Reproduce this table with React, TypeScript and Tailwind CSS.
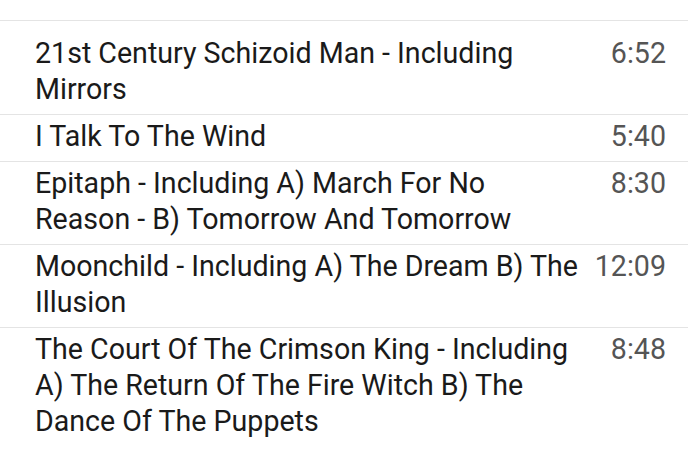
const tracks = [
  { title: '21st Century Schizoid Man - Including Mirrors', length: '6:52' },
  { title: 'I Talk To The Wind', length: '5:40' },
  { title: 'Epitaph - Including A) March For No Reason - B) Tomorrow And Tomorrow', length: '8:30' },
  { title: 'Moonchild - Including A) The Dream B) The Illusion', length: '12:09' },
  {
    title: 'The Court Of The Crimson King - Including A) The Return Of The Fire Witch B) The Dance Of The Puppets',
    length: '8:48',
  },
];

export default function App() {
  return (
    <div className="h-[467px] w-[700px] overflow-hidden bg-white font-['Roboto',sans-serif]">
      <div className="mt-[20px] w-[688px] border-t border-[#e4e4e4] pt-[11px]">
        {tracks.map((track, i) => (
          <div
            key={track.title}
            className={
              'grid grid-cols-[1fr_auto] gap-x-[16px] pb-[7px] pl-[35px] pr-[22px] pt-[3px] text-[28.6px] leading-[36px] ' +
              (i > 0 ? 'border-t border-[#e4e4e4]' : '')
            }
          >
            <span className="text-[#1a1a1a]">{track.title}</span>
            <span className="min-w-[66px] text-right text-[#555555]">{track.length}</span>
          </div>
        ))}
      </div>
    </div>
  );
}
